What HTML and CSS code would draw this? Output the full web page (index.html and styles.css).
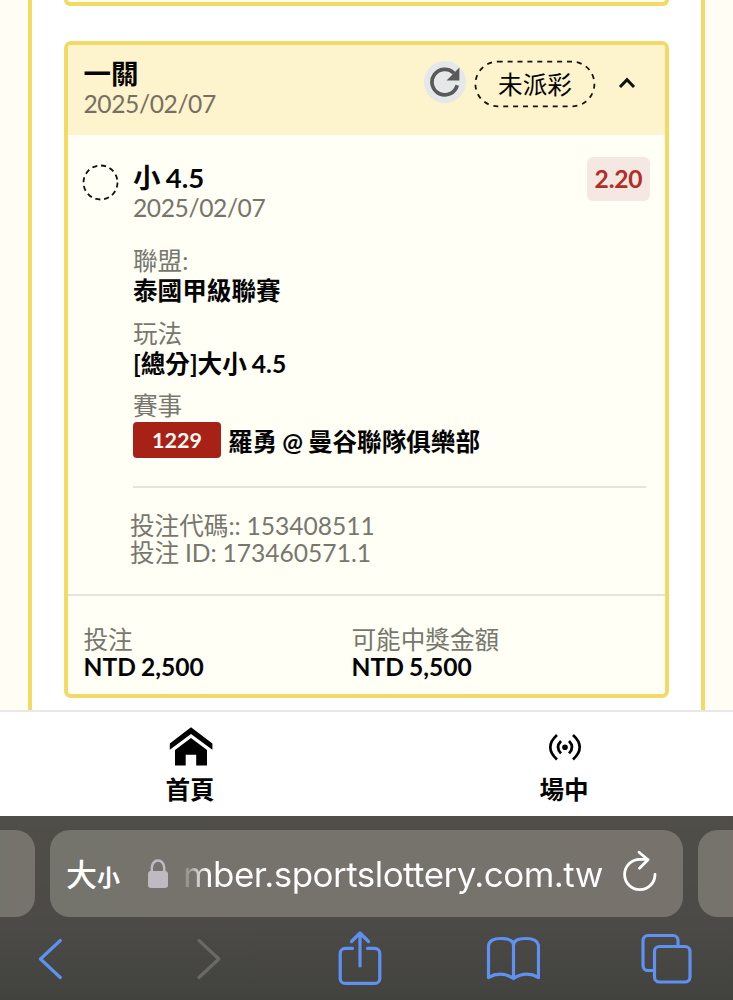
FILE: index.html
```html
<!DOCTYPE html>
<html lang="zh-Hant">
<head>
<meta charset="utf-8">
<title>投注紀錄</title>
<link rel="stylesheet" href="styles.css">
</head>
<body>
<div class="screen">
  <main class="page">
    <div class="panel">
      <div class="card card-previous"></div>
      <section class="card">
        <header class="card-head">
          <div class="head-text">
            <div class="title">一關</div>
            <div class="date">2025/02/07</div>
          </div>
          <div class="head-actions">
            <span class="refresh">
              <svg width="32" height="32" viewBox="0 0 32 32"><path d="M28.2 19.3A12.8 12.8 0 1 1 25 7.2" fill="none" stroke="#59595b" stroke-width="3.7"/><path d="M30.4 1.6v13H17.6z" fill="#59595b"/></svg>
            </span>
            <span class="status">
              <svg class="status-outline" width="122" height="48" viewBox="0 0 122 48"><rect x="1.4" y="1.7" width="119" height="44.6" rx="22.3" fill="none" stroke="#17140a" stroke-width="1.8" stroke-dasharray="5 4.9"/></svg>
              <span class="status-label">未派彩</span>
            </span>
            <svg class="chevron" width="18" height="12" viewBox="0 0 18 12"><path d="M2 10 9 2.7l7 7.3" fill="none" stroke="#111" stroke-width="3"/></svg>
          </div>
        </header>
        <div class="card-body">
          <svg class="pending" width="37" height="37" viewBox="0 0 37 37"><circle cx="18.5" cy="18.5" r="17" fill="none" stroke="#111" stroke-width="1.8" stroke-dasharray="5.1 3.8"/></svg>
          <div class="details">
            <div class="pick">
              <div>
                <div class="title pick-title">小 4.5</div>
                <div class="date">2025/02/07</div>
              </div>
              <span class="odds">2.20</span>
            </div>
            <div class="field"><div class="label">聯盟:</div><div class="value">泰國甲級聯賽</div></div>
            <div class="field"><div class="label">玩法</div><div class="value">[總分]大小 4.5</div></div>
            <div class="field"><div class="label">賽事</div>
              <div class="match"><span class="code">1229</span><span class="value">羅勇 @ 曼谷聯隊俱樂部</span></div>
            </div>
            <div class="ids"><div>投注代碼:: 153408511</div><div>投注 ID: 173460571.1</div></div>
          </div>
        </div>
        <footer class="card-foot">
          <div><div class="label">投注</div><div class="amount">NTD 2,500</div></div>
          <div><div class="label">可能中獎金額</div><div class="amount">NTD 5,500</div></div>
        </footer>
      </section>
    </div>
  </main>
  <nav class="tabs">
    <a class="tab tab-home">
      <svg width="44" height="40" viewBox="0 0 44 40"><path d="M22 .3 43.4 16.6v6.2L22 7 .8 22.8v-6.2z"/><path d="M22 10.9 38 23V38.6H27.2V27.7H16.7V38.6H6V23z"/></svg>
      <span>首頁</span>
    </a>
    <a class="tab tab-live">
      <svg width="44" height="40" viewBox="0 0 44 40"><circle cx="22" cy="20.2" r="2.8"/><g fill="none" stroke="#000" stroke-width="2.7"><path d="M18 14Q12 20.2 18 26.4M26 14Q32 20.2 26 26.4M14 8Q.6 20.2 14 32.4M30 8Q43.4 20.2 30 32.4"/></g></svg>
      <span>場中</span>
    </a>
  </nav>
  <div class="browser">
    <div class="address-row">
      <div class="pill pill-left"></div>
      <div class="pill address">
        <span class="text-size"><span>大</span><small>小</small></span>
        <svg class="lock" width="22" height="30" viewBox="0 0 22 30"><rect x="1" y="12" width="20" height="17" rx="3" fill="#bebac2"/><path d="M4.8 13V8.5a6.2 7 0 0 1 12.4 0V13" fill="none" stroke="#bebac2" stroke-width="2.5"/></svg>
        <span class="url">mber.sportslottery.com.tw</span>
        <svg class="reload" width="36" height="42" viewBox="0 0 36 42"><path d="M33 24.5A15.2 15.2 0 1 1 17.8 9.3H26M17 2.2 26 9.8l-8.5 8.5" fill="none" stroke="#fff" stroke-width="2.8" stroke-linecap="round" stroke-linejoin="round"/></svg>
      </div>
      <div class="pill pill-right"></div>
    </div>
    <div class="toolbar">
      <svg width="26" height="42" viewBox="0 0 26 42"><path d="M24.3 2.5 4.5 21 24.3 39.5"/></svg>
      <svg class="disabled" width="26" height="42" viewBox="0 0 26 42"><path d="M3 2.5 22.8 21 3 39.5"/></svg>
      <svg class="share" width="44" height="56" viewBox="0 0 44 56"><path d="M14.5 18.4H7.2a5 5 0 0 0-5 5v25a5 5 0 0 0 5 5h29.6a5 5 0 0 0 5-5v-25a5 5 0 0 0-5-5h-7.3M22 36V3M13.5 11.5 22 3l8.5 8.5"/></svg>
      <svg class="bookmarks" width="54" height="46" viewBox="0 0 54 46"><path d="M27.5 42.5Q15 34.5 2.5 41.5V9.5Q3.5 2.5 15 2.5 27.5 2.5 27.5 9.5 27.5 2.5 40 2.5 51.5 2.5 52.5 9.5v32Q40 34.5 27.5 42.5V9.5"/></svg>
      <svg class="windows" width="52" height="52" viewBox="0 0 52 52"><path d="M38 13V7.5a5 5 0 0 0-5-5H8a5 5 0 0 0-5 5v25a5 5 0 0 0 5 5h6.5"/><rect x="14.5" y="13.5" width="35.5" height="35.5" rx="5"/></svg>
    </div>
  </div>
</div>
</body>
</html>
```
FILE: styles.css
```css
* { box-sizing: border-box; }

body {
  margin: 0;
  background: #fff;
  color: #050505;
  font-family: Lato, "Noto Sans CJK TC", sans-serif;
  font-size: 24.6px;
  white-space: nowrap;
}

svg { display: block; flex: none; }

.screen {
  width: 733px;
  height: 1000px;
  overflow: hidden;
  display: flex;
  flex-direction: column;
}

.page {
  height: 710px;
  padding: 0 28px;
  overflow: hidden;
  background: #fffdf4;
}

.panel {
  height: 730px;
  border: solid #f2da64;
  border-width: 0 4px;
  padding: 0 32px;
  background: #fff;
}

.card {
  border: 4px solid #f2da64;
  border-radius: 7px;
  background: #fffff5;
  height: 657px;
  overflow: hidden;
}

.card-previous {
  height: 6px;
  border-top: 0;
  border-radius: 0 0 7px 7px;
  margin-bottom: 35px;
}

.card-head {
  display: flex;
  justify-content: space-between;
  height: 90px;
  padding: 13px 29px 0 15.5px;
  background: #fdf3cd;
}

.title { font-size: 27.5px; line-height: 32px; font-weight: 700; word-spacing: -1.5px; }
.date { line-height: 28px; color: #77746b; letter-spacing: -0.4px; }
.card-head .date { color: #777060; }

.head-actions { display: flex; height: 50px; align-items: center; }

.refresh {
  width: 42px;
  height: 42px;
  margin-right: 8px;
  margin-top: -3px;
  border-radius: 50%;
  background: #e5e7e8;
  display: grid;
  place-items: center;
}

.status { display: grid; place-items: center; margin: 2px 22px 0 0; }
.status > * { grid-area: 1 / 1; }
.status-label { line-height: 48px; padding-top: 2px; }

.card-body {
  display: flex;
  height: 461px;
  padding: 21px 15px 0 14px;
  border-bottom: 2px solid #e4e4dc;
}

.pending { margin: 8px 14px 0 0; }
.details { flex: 1; padding-right: 4px; }

.pick { display: flex; justify-content: space-between; height: 90px; margin-right: -4px; }
.pick-title { padding-top: 6px; height: 38px; }

.odds {
  width: 63px;
  height: 44px;
  margin-top: 1px;
  border-radius: 6px;
  background: #f5e7e1;
  color: #b12e27;
  font-weight: 700;
  line-height: 44px;
  letter-spacing: -0.2px;
  text-align: center;
}

.field { height: 72.5px; }
.label { line-height: 29px; color: #77776f; }
.value { line-height: 31px; font-weight: 700; word-spacing: -1px; }

.match { display: flex; gap: 7px; align-items: center; height: 36px; margin-top: 2px; }
.match .value { padding-top: 2px; }

.code {
  width: 88px;
  height: 36px;
  border-radius: 4px;
  background: #a72117;
  color: #fffaf5;
  font-size: 21.5px;
  font-weight: 700;
  line-height: 36px;
  text-align: center;
}

.ids {
  margin-top: 22px;
  padding-top: 24px;
  border-top: 2px solid #e4e4dc;
  color: #77776f;
  line-height: 27px;
  word-spacing: -0.5px;
}
.ids div { margin-left: -3px; }

.card-foot { display: grid; grid-template-columns: 268px 1fr; padding: 30px 16px 0 15.5px; }
.card-foot .label { line-height: 28px; }
.amount { line-height: 26px; font-weight: 700; word-spacing: -1px; }

.tabs {
  height: 106px;
  flex: none;
  border-top: 2px solid #e8e8e8;
  background: #fff;
  display: grid;
  grid-template-columns: 380px 368px;
}

.tab {
  display: flex;
  flex-direction: column;
  align-items: center;
  padding-top: 15px;
  font-weight: 700;
}
.tab span { line-height: 32px; margin-top: 7px; }
.tab-home svg { margin: 0 -1px 0 1px; }
.tab-live svg { margin: 0 -1px 0 1px; }

.browser {
  height: 184px;
  padding-top: 14px;
  background: linear-gradient(#504e48, #4b4a46 60%, #42423f);
}

.address-row { display: flex; gap: 15px; height: 87px; }
.pill { background: linear-gradient(90deg, #74736c, #77736c); flex: none; }
.pill-left { width: 35px; border-radius: 0 20px 20px 0; }
.pill-right { width: 35px; border-radius: 20px 0 0 20px; }

.address {
  width: 633px;
  border-radius: 20px;
  display: flex;
  align-items: center;
  padding-left: 16px;
  color: #fff;
}

.text-size { display: flex; align-items: baseline; width: 81px; font-size: 31px; font-weight: 500; line-height: 40px; margin-top: 3px; }
.text-size small { font-size: 23px; font-weight: 700; }
.lock { margin-right: 14px; }

.url {
  width: 420px;
  font-family: Inter, sans-serif;
  font-size: 35px;
  letter-spacing: -0.55px;
  font-variant-ligatures: none;
  font-feature-settings: "calt" 0;
  background: linear-gradient(90deg, #85837d, #fff 26px);
  background-clip: text;
  -webkit-background-clip: text;
  color: transparent;
}

.reload { margin-left: 19px; margin-top: -5px; }

.toolbar {
  display: flex;
  align-items: center;
  height: 84px;
  padding-left: 36px;
  fill: none;
  stroke: #5e91f2;
  stroke-width: 3.2;
  stroke-linecap: round;
  stroke-linejoin: round;
}
.toolbar .disabled { stroke: #6a6965; margin-left: 134px; }
.share { margin: -3px 0 0 116px; }
.bookmarks { margin-left: 104px; }
.windows { margin-left: 100px; }
```
